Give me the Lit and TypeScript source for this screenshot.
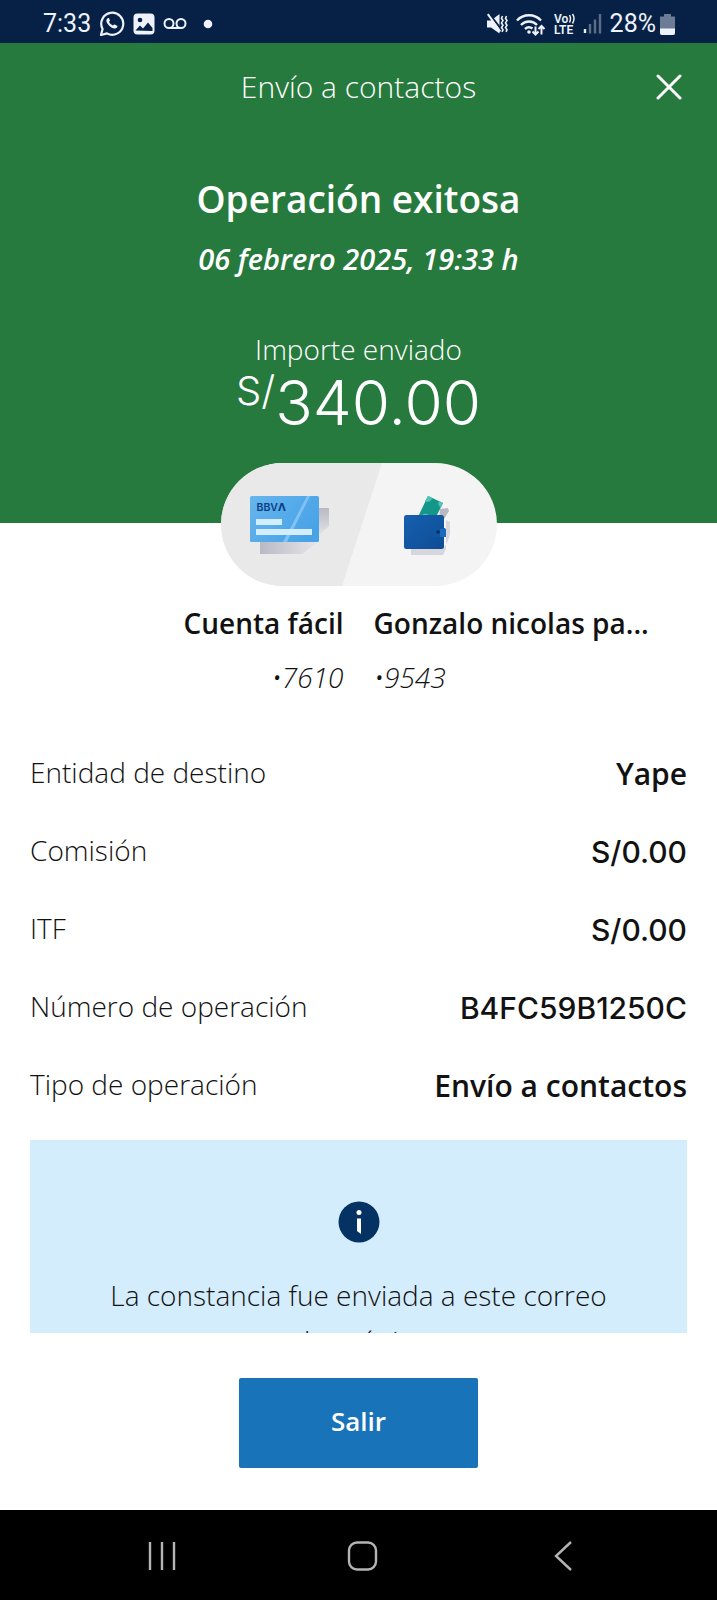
import { LitElement, html, css, svg } from "lit";
import { customElement, state } from "lit/decorators.js";

interface Detail {
  label: string;
  value: string;
  numeric?: boolean;
}

@customElement("status-bar")
class StatusBar extends LitElement {
  static styles = css`
    :host {
      display: flex;
      justify-content: space-between;
      align-items: center;
      height: 43px;
      flex: none;
      padding: 5px 42px 0 43px;
      box-sizing: border-box;
      background: #072146;
      color: #edf2fb;
      font: 400 25px/36px Roboto, sans-serif;
    }
    .group {
      display: flex;
      align-items: center;
      gap: 8px;
    }
    .level {
      display: flex;
      align-items: center;
      gap: 4px;
    }
    svg {
      display: block;
      flex: none;
    }
  `;
  render() {
    return html`
      <div class="group">
        <span>7:33</span>
        <svg width="26" height="26" viewBox="0 0 26 26" fill="none">
          <path d="M2 24l1.6-6A11 11 0 1 1 8 22.4z" stroke="#edf2fb" stroke-width="2.2" stroke-linejoin="round" />
          <path d="M8.8 7.3c-2.300 1.400-1.700 4.300 1.200 7.200s6 4.300 8.200 1.700c.5-.8.200-1.200-.6-1.700l-1.900-1c-.7-.3-1 .1-1.700 1-1.700-.5-3.400-2.200-4-3.700.9-.8 1.100-1.100.8-1.800l-.8-1.700c-.3-.4-.8-.3-1.200 0z" fill="#edf2fb" />
        </svg>
        <svg width="22" height="22" viewBox="0 0 22 22">
          <rect x="0.500" y="0.500" width="21" height="21" rx="4" fill="#edf2fb" />
          <circle cx="7" cy="7" r="2.300" fill="#072146" />
          <path d="M2.500 17.500l4.500-5 3 3 5-6 4.500 5.500v3z" fill="#072146" />
        </svg>
        <svg width="24" height="22" viewBox="0 0 24 22" fill="none" stroke="#edf2fb" stroke-width="2">
          <circle cx="6" cy="10.500" r="4.500" />
          <circle cx="18" cy="10.500" r="4.500" />
          <path d="M6 15h12" />
        </svg>
        <svg width="26" height="22" viewBox="0 0 26 22"><circle cx="13" cy="11" r="4.300" fill="#edf2fb" /></svg>
      </div>
      <div class="group">
        <svg width="21" height="22" viewBox="0 0 21 22">
          <path d="M0 7.500h4l8.500-6.500v19.500L4 14.500H0z" fill="#edf2fb" />
          <path d="M2.500 1.200l11.500 15" stroke="#072146" stroke-width="2.200" />
          <path d="M0.800 1.200l12.500 17.300" stroke="#edf2fb" stroke-width="2" />
          <path d="M15.500 3l-1 2.300 1.500 2.300-1.500 2.300 1.500 2.300-1.500 2.300 1.500 2.300-1 2M19.500 3l-1 2.300 1.500 2.300-1.500 2.300 1.500 2.300-1.500 2.300 1.500 2.300-1 2" fill="none" stroke="#edf2fb" stroke-width="1.600" />
        </svg>
        <svg width="30" height="24" viewBox="0 0 30 24" fill="none" stroke="#edf2fb" stroke-width="2.400">
          <path d="M1 8.500a16.500 16.500 0 0 1 24 0M5 13a11 11 0 0 1 16 0M9 17a6 6 0 0 1 7.500-.5" />
          <circle cx="13" cy="20" r="1.800" fill="#edf2fb" stroke="none" />
          <path d="M19.500 14.500v8M16.500 19.500l3 3 3-3M25.500 22.500v-8M22.500 17l3-3 3 3" stroke-width="2" />
        </svg>
        <svg width="21" height="24" viewBox="0 0 21 24" fill="#edf2fb" font-family="Roboto, sans-serif" font-weight="600">
          <text x="0" y="11" font-size="12">Vo</text>
          <text x="0" y="22" font-size="12">LTE</text>
          <path d="M15.500 3q2 3.500 0 7.500M18.500 2q3 4.500 0 9.500" fill="none" stroke="#edf2fb" stroke-width="1.500" />
        </svg>
        <svg width="19" height="22" viewBox="0 0 19 22">
          <path d="M2 16v4" stroke="#edf2fb" stroke-width="2.400" />
          <path d="M7 11v9.500M12 6.500v14M17 1v19.500" stroke="#5d6d88" stroke-width="2.400" />
        </svg>
        <span class="level">
          28%
          <svg width="15" height="22" viewBox="0 0 15 22">
            <path d="M4 1h7v2.500h4V20a2 2 0 0 1-2 2H2a2 2 0 0 1-2-2V3.500h4z" fill="#6d7c95" />
            <path d="M0 15.500h15V20a2 2 0 0 1-2 2H2a2 2 0 0 1-2-2z" fill="#edf2fb" />
          </svg>
        </span>
      </div>
    `;
  }
}

@customElement("nav-bar")
class NavBar extends LitElement {
  static styles = css`
    :host {
      display: grid;
      grid-template-columns: repeat(3, 1fr);
      flex: none;
      padding: 2px 54px 0 62px;
      height: 90px;
      box-sizing: border-box;
      background: #000;
    }
    button {
      display: flex;
      align-items: center;
      justify-content: center;
      padding: 0;
      border: 0;
      background: none;
    }
  `;
  render() {
    const icon = (shape: unknown) => html`
      <svg width="32" height="32" viewBox="0 0 32 32" fill="none" stroke="#b4b4b4" stroke-width="2.400">${shape}</svg>
    `;
    return html`
      <button aria-label="Recientes">${icon(svg`<path d="M4 2v28M16 2v28M28 2v28" />`)}</button>
      <button aria-label="Inicio">${icon(svg`<rect x="3" y="2.500" width="27" height="27" rx="8" />`)}</button>
      <button aria-label="Atrás">${icon(svg`<path d="M24 2L9 16l15 14" />`)}</button>
    `;
  }
}

@customElement("app-root")
class AppRoot extends LitElement {
  @state() private details: Detail[] = [
    { label: "Entidad de destino", value: "Yape" },
    { label: "Comisión", value: "S/0.00", numeric: true },
    { label: "ITF", value: "S/0.00", numeric: true },
    { label: "Número de operación", value: "B4FC59B1250C", numeric: true },
    { label: "Tipo de operación", value: "Envío a contactos" },
  ];

  static styles = css`
    :host {
      display: flex;
      flex-direction: column;
      height: 100vh;
      background: #fff;
      color: #121212;
      font: 360 28px/44px "Open Sans", sans-serif;
    }
    h1, h2, p, dl, dd, dt {
      margin: 0;
      font-size: inherit;
      font-weight: inherit;
    }
    .scroll {
      flex: 1;
      min-height: 0;
      overflow-y: auto;
      scrollbar-width: none;
    }
    .hero {
      display: flex;
      flex-direction: column;
      align-items: center;
      padding-bottom: 88px;
      background: #277a3e;
      color: #fff;
      text-align: center;
    }
    .topbar {
      display: grid;
      grid-template-columns: 48px 1fr 48px;
      align-items: center;
      align-self: stretch;
      height: 88px;
      padding: 0 24px;
    }
    .topbar h1 {
      grid-column: 2;
      font-size: 30px;
    }
    .close {
      display: flex;
      align-items: center;
      justify-content: center;
      height: 48px;
      padding: 0;
      border: 0;
      background: none;
    }
    .title {
      margin-top: 40px;
      font-size: 37px;
      line-height: 56px;
      font-weight: 600;
    }
    .date {
      margin-top: 10px;
      font-size: 29px;
      font-weight: 600;
      font-style: italic;
    }
    .sent {
      margin-top: 46px;
    }
    .amount {
      display: flex;
      align-items: flex-start;
      font-family: Inter, sans-serif;
      font-size: 62px;
      font-weight: 300;
      line-height: 64px;
    }
    .currency {
      font-size: 40px;
      line-height: 40px;
    }
    .pill {
      position: relative;
      display: block;
      width: 276px;
      height: 123px;
      margin: -60px auto 0;
    }
    .parties {
      display: grid;
      grid-template-columns: 1fr 1fr;
      column-gap: 30px;
      padding: 15px 30px 0;
    }
    .from {
      text-align: right;
    }
    .name {
      font-weight: 600;
      white-space: nowrap;
    }
    .account {
      margin-top: 10px;
      font-style: italic;
    }
    .details {
      display: grid;
      gap: 30px;
      padding: 51px 30px 0;
    }
    .row {
      display: flex;
      justify-content: space-between;
    }
    .row dd {
      font-size: 30px;
      line-height: 48px;
      font-weight: 600;
    }
    .row .numeric {
      font-family: Inter, sans-serif;
      font-weight: 500;
    }
    .note {
      display: flex;
      flex-direction: column;
      align-items: center;
      gap: 29px;
      margin: 30px 30px 0;
      padding: 61px 60px;
      background: #d4edfc;
      line-height: 46px;
      text-align: center;
    }
    .footer {
      display: flex;
      justify-content: center;
      flex: none;
      padding: 45px 0 42px;
    }
    .exit {
      width: 239px;
      height: 90px;
      padding: 0 0 4px;
      border: 0;
      border-radius: 2px;
      background: #1973b8;
      color: #fff;
      font: 600 26px/40px "Open Sans", sans-serif;
    }
  `;

  private renderPill() {
    return html`
      <svg class="pill" viewBox="0 0 276 123" aria-hidden="true">
        <defs>
          <clipPath id="pill"><rect width="276" height="123" rx="61.500" /></clipPath>
          <linearGradient id="card" x1="0" y1="0" x2="1" y2="0.600">
            <stop offset="0" stop-color="#67b5ee" />
            <stop offset="1" stop-color="#48a3e6" />
          </linearGradient>
          <linearGradient id="shade" x1="0" y1="0" x2="1" y2="0">
            <stop offset="0" stop-color="#b9b9c4" />
            <stop offset="1" stop-color="#e6e6e9" />
          </linearGradient>
          <linearGradient id="side" x1="0" y1="0" x2="0" y2="1">
            <stop offset="0" stop-color="#b9b9c4" />
            <stop offset="1" stop-color="#e2e2e6" />
          </linearGradient>
          <linearGradient id="wallet" x1="0" y1="0" x2="1" y2="1">
            <stop offset="0" stop-color="#1560b0" />
            <stop offset="1" stop-color="#0f4c94" />
          </linearGradient>
        </defs>
        <g clip-path="url(#pill)">
          <rect width="276" height="123" fill="#f4f4f4" />
          <path d="M0 0h161l-40 123H0z" fill="#e9e9e9" />
        </g>
        <path d="M39 79h58l-16 12H39z" fill="url(#shade)" />
        <path d="M98 45h10v18l-10 9z" fill="url(#side)" />
        <rect x="29" y="33" width="69" height="46" rx="1.500" fill="url(#card)" />
        <path d="M86 33h3L66 79h-4z" fill="#7fc2f3" />
        <text x="35.500" y="48" font-family="Inter, sans-serif" font-size="10.500" font-weight="600" fill="#0a3f85">BBV<tspan font-family="DejaVu Sans, sans-serif" font-size="10">Λ</tspan></text>
        <rect x="35" y="56" width="26" height="6" fill="#d4edfc" />
        <rect x="35" y="66" width="56" height="6" fill="#d4edfc" />
        <path d="M190 86h32q6-8 7-16V59l-4-2V86l-3 6h-32z" fill="#d6d6dc" />
        <path d="M219 46l8-1 1 3-5 8h-5z" fill="#b9b9c4" />
        <path d="M207 33l15 7-8 16h-18z" fill="#149688" />
        <path d="M207 33l4 2q-1 4-5 4l-2-1zM218 38l4 2-2 4q-4-1-2-6zM201 52q4-3 8 1l-1 3h-9z" fill="#4fc3b5" />
        <rect x="183" y="52" width="40" height="34" rx="2.500" fill="url(#wallet)" />
        <rect x="212" y="65" width="13" height="9" rx="2" fill="#0f57a5" />
        <path d="M219 66h6v8h-6z" fill="#1b6cbd" />
        <circle cx="217" cy="69" r="1.800" fill="#072c5e" />
      </svg>
    `;
  }

  render() {
    return html`
      <status-bar></status-bar>
      <main class="scroll">
        <section class="hero">
          <header class="topbar">
            <h1>Envío a contactos</h1>
            <button class="close" aria-label="Cerrar">
              <svg width="26" height="26" viewBox="0 0 26 26" stroke="#fff" stroke-width="3" stroke-linecap="round">
                <path d="M2 2l22 22M24 2L2 24" />
              </svg>
            </button>
          </header>
          <h2 class="title">Operación exitosa</h2>
          <p class="date">06 febrero 2025, 19:33 h</p>
          <p class="sent">Importe enviado</p>
          <p class="amount"><span class="currency">S/</span>340.00</p>
        </section>
        ${this.renderPill()}
        <section class="parties">
          <div class="from">
            <p class="name">Cuenta fácil</p>
            <p class="account">•7610</p>
          </div>
          <div>
            <p class="name">Gonzalo nicolas pa...</p>
            <p class="account">•9543</p>
          </div>
        </section>
        <dl class="details">
          ${this.details.map(
            (d) => html`
              <div class="row">
                <dt>${d.label}</dt>
                <dd class=${d.numeric ? "numeric" : ""}>${d.value}</dd>
              </div>
            `
          )}
        </dl>
        <section class="note">
          <svg width="42" height="42" viewBox="0 0 42 42" aria-hidden="true">
            <circle cx="21" cy="21" r="20.500" fill="#043263" />
            <circle cx="21" cy="11.500" r="2.500" fill="#fff" />
            <path d="M19 17.500h4V33l-4-3z" fill="#fff" />
          </svg>
          <p>La constancia fue enviada a este correo electrónico</p>
        </section>
      </main>
      <footer class="footer"><button class="exit">Salir</button></footer>
      <nav-bar></nav-bar>
    `;
  }
}
